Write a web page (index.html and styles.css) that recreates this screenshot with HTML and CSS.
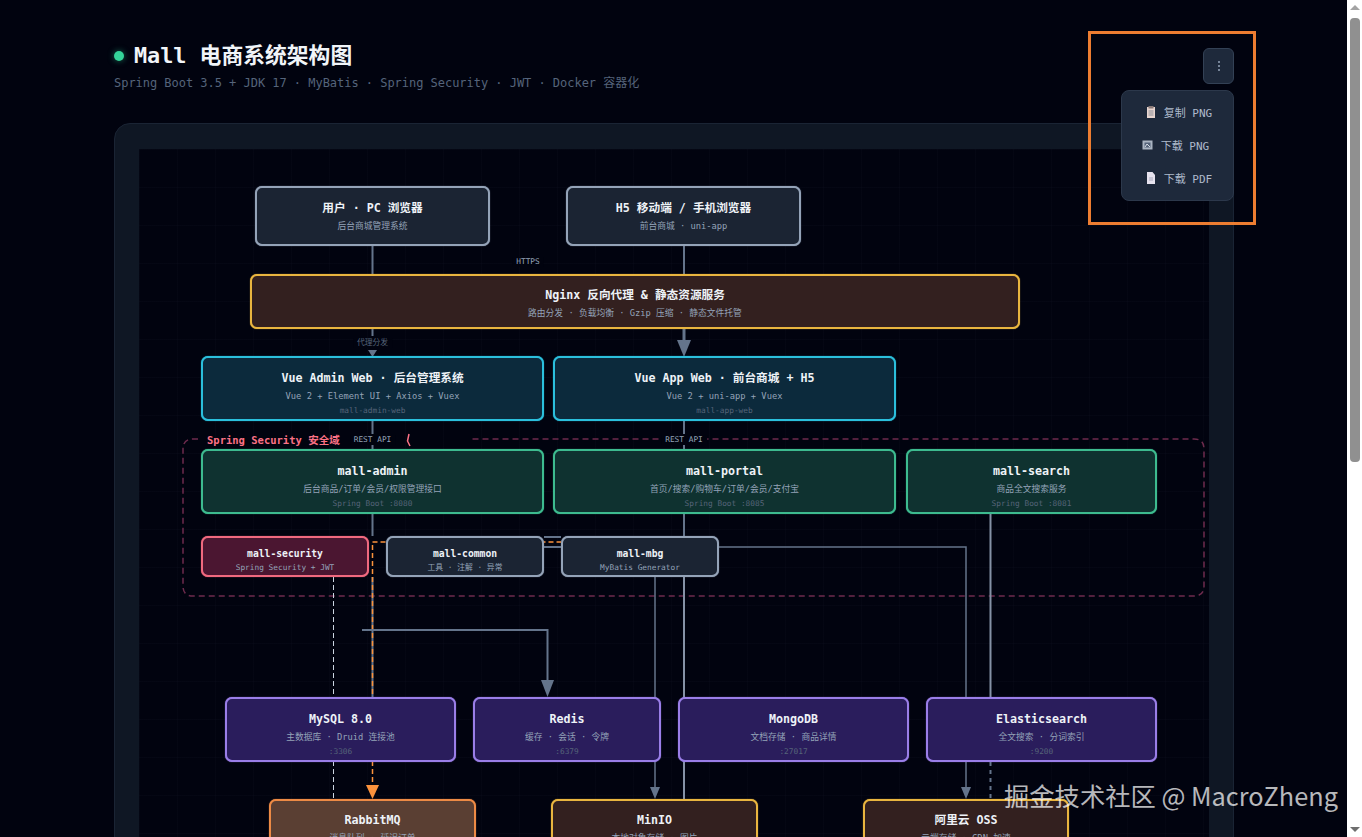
FILE: index.html
```html
<!DOCTYPE html>
<html lang="zh-CN">
<head>
    <meta charset="UTF-8">
    <title>Mall 电商系统架构图</title>
    <link rel="stylesheet" href="styles.css">
</head>
<body>
    <div class="page">
        <header class="page-head">
            <h1><span class="dot"></span>Mall 电商系统架构图</h1>
            <p>Spring Boot 3.5 + JDK 17 · MyBatis · Spring Security · JWT · Docker 容器化</p>
        </header>

        <div class="toolbar">
            <button class="more-btn">
                <svg width="4" height="12" viewBox="0 0 4 12"><circle cx="2" cy="2" r="1" /><circle cx="2" cy="6" r="1" /><circle cx="2" cy="10" r="1" /></svg>
            </button>
            <div class="menu">
                <div class="menu-item">
                    <svg width="10" height="12" viewBox="0 0 10 12"><rect x="1" y="1" width="8" height="11" fill="#e8d5cf" /><rect x="2.5" y="0" width="5" height="2.5" fill="#8a7a78" /><path d="M2.5 5h5M2.5 7h5M2.5 9h5" stroke="#8d8f98" /></svg>
                    <span>复制 PNG</span>
                </div>
                <div class="menu-item wide-icon">
                    <svg width="11" height="10" viewBox="0 0 11 10"><rect x="0.5" y="0.5" width="10" height="9" fill="#aab4c2" /><rect x="2.5" y="2.5" width="6" height="5" fill="#55637a" /><path d="M3 7l2-3 3 3" stroke="#d5dbe4" fill="none" /></svg>
                    <span>下载 PNG</span>
                </div>
                <div class="menu-item">
                    <svg width="10" height="12" viewBox="0 0 10 12"><path d="M1 0h5.500L9 3v9H1z" fill="#e6e2ee" /><path d="M3 6h4M3 8h4" stroke="#a9a8bc" /></svg>
                    <span>下载 PDF</span>
                </div>
            </div>
        </div>

        <main class="card">
            <div class="canvas">
                <!-- edges use page coordinates, the viewBox starts at the canvas corner -->
                <svg class="edges" viewBox="139 149 1070 1200" width="1070" height="1200">
                    <path class="group" d="M198 439H193Q183 439 183 449V586Q183 596 193 596H1194Q1204 596 1204 586V449Q1204 439 1194 439H470" />
                    <path class="pink" d="M409 434L407.500 441L410 446" />

                    <path class="edge" d="M372.500 246V274M684 246V274" />
                    <path class="edge" d="M372.500 329V336M372.500 350V352" />
                    <path class="head" d="M368 350H377L372.500 357Z" />
                    <path class="edge wide" d="M684 329V342" />
                    <path class="head" d="M677 340H691L684 357Z" />
                    <path class="edge" d="M372.500 421V434M684 421V434M372.500 444V449M684 444V449" />

                    <path class="edge" d="M372.500 514V536M684 514V536" />
                    <path class="edge" d="M544 537H561M544 547H561" />
                    <path class="edge thin" d="M719 547H966V790" />
                    <path class="head" d="M961 787H971L966 799Z" />

                    <path class="edge" d="M372.500 577V697" />
                    <path class="orange" d="M372.500 790V542H561" />
                    <path class="head-orange" d="M366 785H379L372.500 799Z" />
                    <path class="white-dash" d="M333.500 577V799" />

                    <path class="edge thin" d="M655 577V790" />
                    <path class="head" d="M650 787H660L655 799Z" />
                    <path class="edge light" d="M684 577V799" />

                    <path class="edge light" d="M990.500 514V697" />
                    <path class="white-dash dim" d="M990.500 762V799" />

                    <path class="edge" d="M362 630H547.500V685" />
                    <path class="head" d="M541 680H554L547.500 697Z" />
                </svg>

                <span class="edge-label https">HTTPS</span>
                <span class="edge-label proxy">代理分发</span>
                <span class="edge-label rest-a">REST API</span>
                <span class="edge-label rest-b">REST API</span>
                <span class="group-label">Spring Security 安全域</span>

                <div class="node client n-user"><b>用户 · PC 浏览器</b><small>后台商城管理系统</small></div>
                <div class="node client n-h5"><b>H5 移动端 / 手机浏览器</b><small>前台商城 · uni-app</small></div>
                <div class="node gateway n-nginx"><b>Nginx 反向代理 &amp; 静态资源服务</b><small>路由分发 · 负载均衡 · Gzip 压缩 · 静态文件托管</small></div>

                <div class="node web n-admin-web"><b>Vue Admin Web · 后台管理系统</b><small>Vue 2 + Element UI + Axios + Vuex</small><i>mall-admin-web</i></div>
                <div class="node web n-app-web"><b>Vue App Web · 前台商城 + H5</b><small>Vue 2 + uni-app + Vuex</small><i>mall-app-web</i></div>

                <div class="node service n-admin"><b>mall-admin</b><small>后台商品/订单/会员/权限管理接口</small><i>Spring Boot :8080</i></div>
                <div class="node service n-portal"><b>mall-portal</b><small>首页/搜索/购物车/订单/会员/支付宝</small><i>Spring Boot :8085</i></div>
                <div class="node service n-search"><b>mall-search</b><small>商品全文搜索服务</small><i>Spring Boot :8081</i></div>

                <div class="node mini security n-security"><b>mall-security</b><small>Spring Security + JWT</small></div>
                <div class="node mini client n-common"><b>mall-common</b><small>工具 · 注解 · 异常</small></div>
                <div class="node mini client n-mbg"><b>mall-mbg</b><small>MyBatis Generator</small></div>

                <div class="node store n-mysql"><b>MySQL 8.0</b><small>主数据库 · Druid 连接池</small><i>:3306</i></div>
                <div class="node store n-redis"><b>Redis</b><small>缓存 · 会话 · 令牌</small><i>:6379</i></div>
                <div class="node store n-mongo"><b>MongoDB</b><small>文档存储 · 商品详情</small><i>:27017</i></div>
                <div class="node store n-es"><b>Elasticsearch</b><small>全文搜索 · 分词索引</small><i>:9200</i></div>

                <div class="node queue n-rabbit"><b>RabbitMQ</b><small>消息队列 · 延迟订单</small></div>
                <div class="node gateway n-minio"><b>MinIO</b><small>本地对象存储 · 图片</small></div>
                <div class="node gateway n-oss"><b>阿里云 OSS</b><small>云端存储 · CDN 加速</small></div>
            </div>
        </main>
    </div>

    <aside class="scrollbar">
        <span class="arrow-up"></span>
        <span class="thumb"></span>
        <span class="arrow-down"></span>
    </aside>

    <div class="callout"></div>
    <div class="watermark">掘金技术社区 @ MacroZheng</div>
</body>
</html>
```

FILE: styles.css
```css
* {
    box-sizing: border-box;
}
html, body {
    height: 100%;
    margin: 0;
}
body {
    display: flex;
    position: relative;
    overflow: hidden;
    background-color: #01030f;
    color: #e2e8f0;
    font-family: "DejaVu Sans Mono", "Noto Sans CJK SC", monospace;
}
.page {
    position: relative;
    width: 1347px;
    height: 837px;
    padding: 42px 113px 0 114px;
    overflow: hidden;
}
.page-head h1 {
    display: flex;
    align-items: center;
    gap: 10px;
    margin: 0;
    height: 27px;
    font-size: 21.800px;
    line-height: 27px;
    font-weight: bold;
    color: #f1f5f9;
    white-space: pre;
}
.dot {
    width: 10px;
    height: 10px;
    border-radius: 50%;
    background-color: #34d399;
    box-shadow: 0 0 6px rgba(52, 211, 153, 0.5);
}
.page-head p {
    margin: 6px 0 0;
    font-size: 12px;
    line-height: 16px;
    letter-spacing: -0.03px;
    color: #55647b;
    white-space: nowrap;
}

/* top right actions */
.toolbar {
    position: absolute;
    top: 48px;
    left: 1121px;
    width: 113px;
    z-index: 3;
}
.more-btn {
    display: flex;
    align-items: center;
    justify-content: center;
    width: 31px;
    height: 36px;
    margin-left: 82px;
    padding: 0;
    background-color: #1e293b;
    border: 1px solid #334155;
    border-radius: 6px;
    fill: #94a3b8;
}
.menu {
    height: 111px;
    margin-top: 6px;
    padding-top: 4px;
    background-color: #1e293b;
    border: 1px solid #2c384b;
    border-radius: 8px;
}
.menu-item {
    display: flex;
    align-items: center;
    justify-content: center;
    gap: 8px;
    height: 33px;
    padding-left: 3px;
    font-size: 11px;
    color: #aebacb;
}
.menu-item.wide-icon {
    padding-left: 0;
    padding-right: 4px;
}

/* diagram */
.card {
    height: 900px;
    margin-top: 32px;
    padding: 25px 24px;
    background-color: #0f1724;
    border: 1px solid #1a2434;
    border-radius: 16px;
}
.canvas {
    position: relative;
    width: 1070px;
    height: 850px;
    background-color: #01030f;
    background-image:
        linear-gradient(rgba(148, 163, 184, 0.025) 1px, transparent 1px),
        linear-gradient(90deg, rgba(148, 163, 184, 0.025) 1px, transparent 1px);
    background-size: 38px 38px;
}
.edges {
    position: absolute;
    top: 0;
    left: 0;
    fill: none;
}
.edge {
    stroke: #64748b;
    stroke-width: 2;
}
.edge.wide {
    stroke-width: 3;
}
.edge.thin {
    stroke-width: 1.5;
}
.edge.light {
    stroke: #8592a6;
    stroke-width: 2;
}
.head {
    fill: #64748b;
}
.head-orange {
    fill: #fb923c;
}
.orange {
    stroke: #fb923c;
    stroke-width: 1.5;
    stroke-dasharray: 5 3;
}
.white-dash {
    stroke: #cbd5e1;
    stroke-width: 1;
    stroke-dasharray: 5 3;
}
.white-dash.dim {
    stroke: #64748b;
    stroke-width: 2;
    stroke-dasharray: 4 4;
}
.group {
    stroke: #6d2b4d;
    stroke-width: 1.5;
    stroke-dasharray: 6 4;
}
.pink {
    stroke: #fb7185;
    stroke-width: 1.5;
}
.edge-label {
    position: absolute;
    padding: 0 4px;
    font-size: 7.800px;
    line-height: 10px;
    color: #94a3b8;
    background-color: #01030f;
    transform: translateX(-50%);
    white-space: nowrap;
}
.https { left: 389px; top: 108px; }
.proxy { left: 233.500px; top: 189px; color: #56647a; }
.rest-a { left: 233.500px; top: 286px; }
.rest-b { left: 545px; top: 286px; }
.group-label {
    position: absolute;
    left: 68px;
    top: 284px;
    font-size: 10.500px;
    line-height: 14px;
    font-weight: bold;
    color: #fb7185;
    white-space: nowrap;
}

/* nodes */
.node {
    position: absolute;
    display: flex;
    flex-direction: column;
    align-items: center;
    height: 65px;
    padding-top: 13px;
    border: 2px solid var(--line);
    border-radius: 7px;
    box-shadow: 0 0 1px var(--line);
    text-align: center;
    white-space: nowrap;
}
.node b {
    font-size: 11.670px;
    line-height: 14px;
    color: #eef2f7;
}
.node small {
    margin-top: 5px;
    font-size: 8.750px;
    line-height: 12px;
    color: #94a3b8;
}
.node i {
    margin-top: 4px;
    font-size: 7.800px;
    line-height: 10px;
    font-style: normal;
    color: #566479;
}
.node.mini {
    height: 41px;
    padding-top: 9px;
}
.node.mini b {
    font-size: 9.700px;
}
.node.mini small {
    margin-top: 1px;
    font-size: 7.800px;
}
.client {
    --line: #94a3b8;
    background-color: #1b2433;
}
.gateway {
    --line: #e9b53f;
    background-color: #33201f;
}
.web {
    --line: #2bbfdc;
    background-color: #0c2a3c;
}
.service {
    --line: #3dbb8f;
    background-color: #0f3230;
}
.security {
    --line: #f0697f;
    background-color: #4b1631;
}
.store {
    --line: #9a7ee8;
    background-color: #2a1d5c;
}
.queue {
    --line: #ed8a45;
    background-color: #5a3f33;
}
.n-user { left: 116px; top: 37px; width: 235px; height: 60px; }
.n-h5 { left: 427px; top: 37px; width: 235px; height: 60px; }
.n-nginx { left: 111px; top: 125px; width: 770px; height: 55px; padding-top: 12px; }
.n-admin-web { left: 62px; top: 207px; width: 343px; }
.n-app-web { left: 414px; top: 207px; width: 343px; }
.n-admin { left: 62px; top: 300px; width: 343px; }
.n-portal { left: 414px; top: 300px; width: 343px; }
.n-search { left: 767px; top: 300px; width: 251px; }
.n-security { left: 62px; top: 387px; width: 168px; }
.n-common { left: 247px; top: 387px; width: 158px; }
.n-mbg { left: 422px; top: 387px; width: 158px; }
.n-mysql { left: 86px; top: 548px; width: 231px; }
.n-redis { left: 334px; top: 548px; width: 188px; }
.n-mongo { left: 539px; top: 548px; width: 231px; }
.n-es { left: 787px; top: 548px; width: 231px; }
.n-rabbit { left: 130px; top: 650px; width: 207px; padding-top: 12px; }
.n-minio { left: 412px; top: 650px; width: 207px; padding-top: 12px; }
.n-oss { left: 724px; top: 650px; width: 206px; padding-top: 12px; }

/* browser scrollbar in the shot */
.scrollbar {
    display: flex;
    flex-direction: column;
    align-items: center;
    width: 15px;
    height: 837px;
    background-color: #fff;
}
.arrow-up, .arrow-down {
    width: 0;
    height: 0;
    border-left: 5px solid transparent;
    border-right: 5px solid transparent;
}
.arrow-up {
    margin-top: 5px;
    border-bottom: 5px solid #a3a3a3;
}
.thumb {
    width: 10px;
    height: 444px;
    margin-top: 8px;
    background-color: #909090;
    border-radius: 4px;
}
.arrow-down {
    margin-top: auto;
    margin-bottom: 5px;
    border-top: 5px solid #6e6e6e;
}

/* overlays on the screenshot */
.callout {
    position: absolute;
    left: 1088px;
    top: 31px;
    width: 168px;
    height: 194px;
    border: 3px solid #ed7d31;
    z-index: 4;
}
.watermark {
    position: absolute;
    left: 1004px;
    top: 777px;
    font-family: "Noto Sans CJK SC", "Noto Sans", sans-serif;
    font-size: 25.300px;
    line-height: 36px;
    color: rgba(255, 255, 255, 0.72);
    white-space: nowrap;
    z-index: 4;
}
```
